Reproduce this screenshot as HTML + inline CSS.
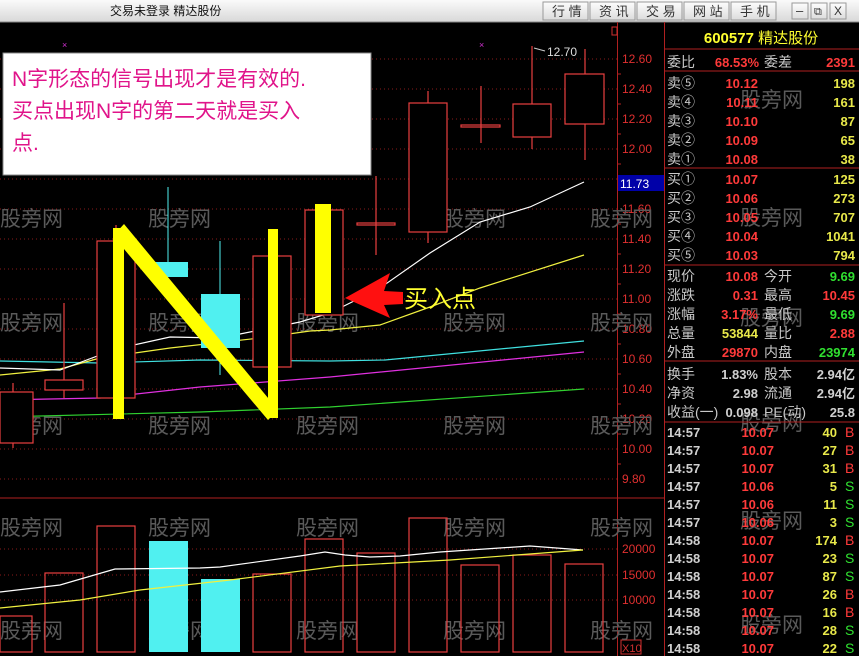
<!DOCTYPE html>
<html><head><meta charset="utf-8"><style>
html,body{margin:0;padding:0;background:#000;width:859px;height:656px;overflow:hidden}
svg{display:block}
text{font-family:"Liberation Sans","Noto Sans CJK SC",sans-serif}
.wm{fill:#5a5a5a;font-size:21px}
.ax{fill:#e03030;font-size:12px}
.lb{fill:#c8c8c8;font-size:14px}
.n{font-size:13px;font-weight:bold}
.r{fill:#ff3a3a}.y{fill:#e8e84a}.g{fill:#30e030}.w{fill:#d0d0d0}
</style></head><body>
<svg width="859" height="656" viewBox="0 0 859 656">
<defs><linearGradient id="tb" x1="0" y1="0" x2="0" y2="1"><stop offset="0" stop-color="#fafafa"/><stop offset="1" stop-color="#d8d8d8"/></linearGradient>
<linearGradient id="bt" x1="0" y1="0" x2="0" y2="1"><stop offset="0" stop-color="#fdfdfd"/><stop offset="1" stop-color="#dcdcdc"/></linearGradient></defs>
<rect x="0" y="0" width="859" height="656" fill="#000"/>
<!-- title bar -->
<rect x="0" y="0" width="859" height="22" fill="url(#tb)"/>
<line x1="0" y1="22" x2="859" y2="22" stroke="#888"/>
<text x="110" y="15" font-size="12" fill="#111">交易未登录 精达股份</text>
<g font-size="13" fill="#333">
<rect x="543" y="2" width="45" height="18" fill="url(#bt)" stroke="#999"/><text x="552" y="16">行 情</text>
<rect x="590" y="2" width="45" height="18" fill="url(#bt)" stroke="#999"/><text x="599" y="16">资 讯</text>
<rect x="637" y="2" width="45" height="18" fill="url(#bt)" stroke="#999"/><text x="646" y="16">交 易</text>
<rect x="684" y="2" width="45" height="18" fill="url(#bt)" stroke="#999"/><text x="693" y="16">网 站</text>
<rect x="731" y="2" width="45" height="18" fill="url(#bt)" stroke="#999"/><text x="740" y="16">手 机</text>
<rect x="792" y="3" width="16" height="16" fill="url(#bt)" stroke="#999"/><text x="796" y="15">–</text>
<rect x="811" y="3" width="16" height="16" fill="url(#bt)" stroke="#999"/><text x="814" y="15" font-size="11">⧉</text>
<rect x="830" y="3" width="16" height="16" fill="url(#bt)" stroke="#999"/><text x="834" y="15" font-size="12">X</text>
</g>
<!-- grid -->
<g stroke="#8a1a1a" stroke-dasharray="1,3">
<line x1="0" y1="59" x2="617" y2="59"/><line x1="0" y1="89" x2="617" y2="89"/><line x1="0" y1="119" x2="617" y2="119"/><line x1="0" y1="149" x2="617" y2="149"/><line x1="0" y1="179" x2="617" y2="179"/><line x1="0" y1="209" x2="617" y2="209"/><line x1="0" y1="239" x2="617" y2="239"/><line x1="0" y1="269" x2="617" y2="269"/><line x1="0" y1="299" x2="617" y2="299"/><line x1="0" y1="329" x2="617" y2="329"/><line x1="0" y1="359" x2="617" y2="359"/><line x1="0" y1="389" x2="617" y2="389"/><line x1="0" y1="419" x2="617" y2="419"/><line x1="0" y1="449" x2="617" y2="449"/><line x1="0" y1="479" x2="617" y2="479"/>
<line x1="0" y1="549" x2="617" y2="549"/><line x1="0" y1="575" x2="617" y2="575"/><line x1="0" y1="600" x2="617" y2="600"/>
</g>
<line x1="0" y1="498" x2="664" y2="498" stroke="#b02020"/>
<line x1="617.5" y1="22" x2="617.5" y2="656" stroke="#b02020"/>
<line x1="664.5" y1="22" x2="664.5" y2="656" stroke="#b02020"/>
<rect x="612" y="27" width="5" height="8" fill="none" stroke="#d03030"/>
<!-- axis labels -->
<g class="ax">
<text x="622" y="63">12.60</text><text x="622" y="93">12.40</text><text x="622" y="123">12.20</text><text x="622" y="153">12.00</text><text x="622" y="213">11.60</text><text x="622" y="243">11.40</text><text x="622" y="273">11.20</text><text x="622" y="303">11.00</text><text x="622" y="333">10.80</text><text x="622" y="363">10.60</text><text x="622" y="393">10.40</text><text x="622" y="423">10.20</text><text x="622" y="453">10.00</text><text x="622" y="483">9.80</text>
<text x="622" y="553">20000</text><text x="622" y="579">15000</text><text x="622" y="604">10000</text>
</g>
<g stroke="#b02020"><line x1="617" y1="74" x2="621" y2="74"/><line x1="617" y1="104" x2="621" y2="104"/><line x1="617" y1="134" x2="621" y2="134"/><line x1="617" y1="164" x2="621" y2="164"/><line x1="617" y1="224" x2="621" y2="224"/><line x1="617" y1="254" x2="621" y2="254"/><line x1="617" y1="284" x2="621" y2="284"/><line x1="617" y1="314" x2="621" y2="314"/><line x1="617" y1="344" x2="621" y2="344"/><line x1="617" y1="374" x2="621" y2="374"/><line x1="617" y1="404" x2="621" y2="404"/><line x1="617" y1="434" x2="621" y2="434"/><line x1="617" y1="464" x2="621" y2="464"/></g>
<rect x="618" y="175" width="46" height="16" fill="#0000a8"/>
<text x="620" y="188" font-size="12" fill="#fff">11.73</text>
<rect x="621" y="640" width="20" height="14" fill="none" stroke="#d03030"/><text x="622" y="652" font-size="11" fill="#d03030">X10</text>
<!-- watermarks -->
<g class="wm">
<text x="0" y="226">股旁网</text><text x="148" y="226">股旁网</text><text x="443" y="226">股旁网</text><text x="590" y="226">股旁网</text>
<text x="0" y="330">股旁网</text><text x="148" y="330">股旁网</text><text x="296" y="330">股旁网</text><text x="443" y="330">股旁网</text><text x="590" y="330">股旁网</text>
<text x="0" y="433">股旁网</text><text x="148" y="433">股旁网</text><text x="296" y="433">股旁网</text><text x="443" y="433">股旁网</text><text x="590" y="433">股旁网</text>
<text x="0" y="535">股旁网</text><text x="148" y="535">股旁网</text><text x="296" y="535">股旁网</text><text x="443" y="535">股旁网</text><text x="590" y="535">股旁网</text>
<text x="0" y="638">股旁网</text><text x="148" y="638">股旁网</text><text x="296" y="638">股旁网</text><text x="443" y="638">股旁网</text><text x="590" y="638">股旁网</text>
<text x="740" y="107">股旁网</text><text x="740" y="225">股旁网</text><text x="740" y="325">股旁网</text><text x="740" y="430">股旁网</text><text x="740" y="528">股旁网</text><text x="740" y="632">股旁网</text>
</g>
<text x="62" y="48" font-size="9" fill="#d030d0">×</text><text x="479" y="48" font-size="9" fill="#d030d0">×</text>
<!-- MAs -->
<g fill="none" stroke-width="1.2">
<polyline stroke="#40e0e0" points="0,361 100,363 200,360 330,361 385,360 584,341"/>
<polyline stroke="#e030e0" points="0,400 100,398 200,387 330,377 584,352"/>
<polyline stroke="#30d030" points="0,417 200,412 330,407 584,389"/>
<polyline stroke="#f0f040" points="0,375 60,369 100,358 170,348 260,338 310,331 330,330 380,325 430,307 480,288 584,255"/>
<polyline stroke="#ffffff" points="0,368 60,370 100,355 120,348 170,337 220,338 260,330 300,322 330,313 380,288 430,253 480,222 530,207 584,182"/>
</g>
<!-- candles -->
<g fill="none" stroke="#e84040" stroke-width="1.2">
<line x1="13" y1="383" x2="13" y2="448"/><rect x="0" y="392" width="33" height="51" fill="#000"/>
<line x1="64" y1="303" x2="64" y2="398"/><rect x="45" y="380" width="38" height="10" fill="#000"/>
<line x1="116" y1="225" x2="116" y2="241"/><rect x="97" y="241" width="38" height="157" fill="#000"/>
<rect x="253" y="256" width="38" height="111" fill="#000"/>
<rect x="305" y="210" width="38" height="105" fill="#000"/>
<line x1="376" y1="176" x2="376" y2="255"/><rect x="357" y="223" width="38" height="2"/>
<line x1="428" y1="91" x2="428" y2="243"/><rect x="409" y="103" width="38" height="129" fill="#000"/>
<line x1="481" y1="86" x2="481" y2="143"/><rect x="461" y="125" width="39" height="2"/>
<line x1="532" y1="46" x2="532" y2="149"/><rect x="513" y="104" width="38" height="33" fill="#000"/>
<line x1="585" y1="49" x2="585" y2="160"/><rect x="565" y="74" width="39" height="50" fill="#000"/>
</g>
<line x1="168" y1="187" x2="168" y2="262" stroke="#50f0f0"/>
<rect x="148" y="262" width="40" height="15" fill="#50f0f0"/>
<line x1="220" y1="241" x2="220" y2="375" stroke="#50f0f0"/>
<rect x="201" y="294" width="39" height="54" fill="#50f0f0"/>
<path d="M534 48 L545 51" stroke="#ccc" fill="none"/><text x="547" y="56" font-size="12" fill="#ddd">12.70</text>
<!-- N -->
<g fill="#ffff00">
<rect x="113" y="228" width="11" height="191"/>
<polygon points="113,236 124,224 278,410 268,420"/>
<rect x="268" y="229" width="10" height="189"/>
<rect x="315" y="204" width="16" height="109"/>
</g>
<!-- arrow -->
<polygon points="345,298 390,273 384,291 403,292 403,304 384,305 390,318" fill="#ff1010"/>
<text x="404" y="307" font-size="24" fill="#ffff30" font-family="Liberation Serif,'Noto Serif CJK SC',serif">买入点</text>
<!-- text box -->
<rect x="3" y="53" width="368" height="122" fill="#fff" stroke="#888"/>
<g font-size="21" fill="#e0148a">
<text x="12" y="86">N字形态的信号出现才是有效的.</text>
<text x="12" y="118">买点出现N字的第二天就是买入</text>
<text x="12" y="150">点.</text>
</g>
<!-- volume -->
<g fill="none" stroke="#e84040" stroke-width="1.2">
<rect x="0" y="616" width="32" height="36"/><rect x="45" y="573" width="38" height="79"/><rect x="97" y="526" width="38" height="126"/>
<rect x="253" y="574" width="38" height="78"/><rect x="305" y="539" width="38" height="113"/><rect x="357" y="553" width="38" height="99"/>
<rect x="409" y="518" width="38" height="134"/><rect x="461" y="565" width="38" height="87"/><rect x="513" y="555" width="38" height="97"/><rect x="565" y="564" width="38" height="88"/>
</g>
<rect x="149" y="541" width="39" height="111" fill="#50f0f0"/><rect x="201" y="579" width="39" height="73" fill="#50f0f0"/>
<polyline fill="none" stroke="#fff" stroke-width="1.2" points="0,592 60,585 115,569 200,568 220,567 300,556 325,552 345,555 370,557 400,556 440,552 530,546 583,550"/>
<polyline fill="none" stroke="#f0f040" stroke-width="1.2" points="0,608 80,600 140,590 230,580 340,566 450,560 583,550"/>
<!-- right panel -->
<text x="761" y="43" text-anchor="middle" font-size="15" fill="#ffff30"><tspan font-weight="bold">600577</tspan> 精达股份</text>
<g stroke="#b02020"><line x1="664" y1="49" x2="859" y2="49"/><line x1="664" y1="71" x2="859" y2="71"/><line x1="664" y1="168" x2="859" y2="168"/><line x1="664" y1="265" x2="859" y2="265"/><line x1="664" y1="361" x2="859" y2="361"/><line x1="664" y1="422" x2="859" y2="422"/></g>
<g class="lb">
<text x="667" y="67">委比</text><text x="764" y="67">委差</text>
<text x="667" y="88">卖⑤</text><text x="667" y="107">卖④</text><text x="667" y="126">卖③</text><text x="667" y="145">卖②</text><text x="667" y="164">卖①</text>
<text x="667" y="184">买①</text><text x="667" y="203">买②</text><text x="667" y="222">买③</text><text x="667" y="241">买④</text><text x="667" y="260">买⑤</text>
<text x="667" y="281">现价</text><text x="764" y="281">今开</text>
<text x="667" y="300">涨跌</text><text x="764" y="300">最高</text>
<text x="667" y="319">涨幅</text><text x="764" y="319">最低</text>
<text x="667" y="338">总量</text><text x="764" y="338">量比</text>
<text x="667" y="357">外盘</text><text x="764" y="357">内盘</text>
<text x="667" y="379">换手</text><text x="764" y="379">股本</text>
<text x="667" y="398">净资</text><text x="764" y="398">流通</text>
<text x="667" y="417">收益(一)</text><text x="764" y="417">PE(动)</text>
</g>
<g class="n" text-anchor="end">
<text x="759" y="67" class="r">68.53%</text><text x="855" y="67" class="r">2391</text>
<text x="758" y="88" class="r">10.12</text><text x="855" y="88" class="y">198</text>
<text x="758" y="107" class="r">10.11</text><text x="855" y="107" class="y">161</text>
<text x="758" y="126" class="r">10.10</text><text x="855" y="126" class="y">87</text>
<text x="758" y="145" class="r">10.09</text><text x="855" y="145" class="y">65</text>
<text x="758" y="164" class="r">10.08</text><text x="855" y="164" class="y">38</text>
<text x="758" y="184" class="r">10.07</text><text x="855" y="184" class="y">125</text>
<text x="758" y="203" class="r">10.06</text><text x="855" y="203" class="y">273</text>
<text x="758" y="222" class="r">10.05</text><text x="855" y="222" class="y">707</text>
<text x="758" y="241" class="r">10.04</text><text x="855" y="241" class="y">1041</text>
<text x="758" y="260" class="r">10.03</text><text x="855" y="260" class="y">794</text>
<text x="758" y="281" class="r">10.08</text><text x="855" y="281" class="g">9.69</text>
<text x="758" y="300" class="r">0.31</text><text x="855" y="300" class="r">10.45</text>
<text x="758" y="319" class="r">3.17%</text><text x="855" y="319" class="g">9.69</text>
<text x="758" y="338" class="y">53844</text><text x="855" y="338" class="r">2.88</text>
<text x="758" y="357" class="r">29870</text><text x="855" y="357" class="g">23974</text>
<text x="758" y="379" class="w">1.83%</text><text x="855" y="379" class="w">2.94亿</text>
<text x="758" y="398" class="w">2.98</text><text x="855" y="398" class="w">2.94亿</text>
<text x="758" y="417" class="w">0.098</text><text x="855" y="417" class="w">25.8</text>
</g>
<g class="n">
<g class="w"><text x="667" y="437">14:57</text><text x="667" y="455">14:57</text><text x="667" y="473">14:57</text><text x="667" y="491">14:57</text><text x="667" y="509">14:57</text><text x="667" y="527">14:57</text><text x="667" y="545">14:58</text><text x="667" y="563">14:58</text><text x="667" y="581">14:58</text><text x="667" y="599">14:58</text><text x="667" y="617">14:58</text><text x="667" y="635">14:58</text><text x="667" y="653">14:58</text></g>
<g class="r" text-anchor="end"><text x="774" y="437">10.07</text><text x="774" y="455">10.07</text><text x="774" y="473">10.07</text><text x="774" y="491">10.06</text><text x="774" y="509">10.06</text><text x="774" y="527">10.06</text><text x="774" y="545">10.07</text><text x="774" y="563">10.07</text><text x="774" y="581">10.07</text><text x="774" y="599">10.07</text><text x="774" y="617">10.07</text><text x="774" y="635">10.07</text><text x="774" y="653">10.07</text></g>
<g class="y" text-anchor="end"><text x="837" y="437">40</text><text x="837" y="455">27</text><text x="837" y="473">31</text><text x="837" y="491">5</text><text x="837" y="509">11</text><text x="837" y="527">3</text><text x="837" y="545">174</text><text x="837" y="563">23</text><text x="837" y="581">87</text><text x="837" y="599">26</text><text x="837" y="617">16</text><text x="837" y="635">28</text><text x="837" y="653">22</text></g>
<g font-weight="normal" font-size="14"><text x="845" y="437" class="r">B</text><text x="845" y="455" class="r">B</text><text x="845" y="473" class="r">B</text><text x="845" y="491" class="g">S</text><text x="845" y="509" class="g">S</text><text x="845" y="527" class="g">S</text><text x="845" y="545" class="r">B</text><text x="845" y="563" class="g">S</text><text x="845" y="581" class="g">S</text><text x="845" y="599" class="r">B</text><text x="845" y="617" class="r">B</text><text x="845" y="635" class="g">S</text><text x="845" y="653" class="g">S</text></g>
</g>
</svg>
</body></html>
